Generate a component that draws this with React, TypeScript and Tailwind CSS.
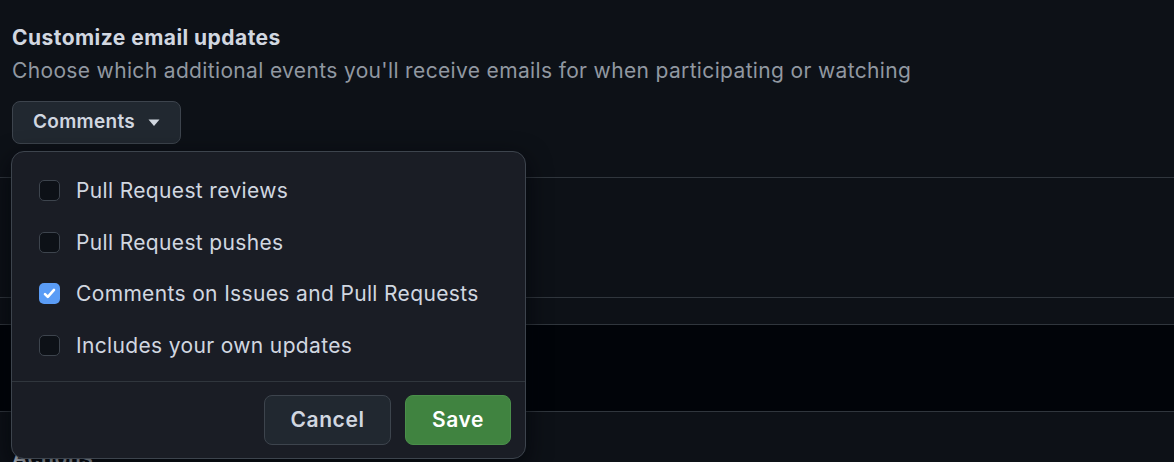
import { useState } from "react";

const options = [
  { id: "reviews", label: "Pull Request reviews", checked: false },
  { id: "pushes", label: "Pull Request pushes", checked: false },
  { id: "comments", label: "Comments on Issues and Pull Requests", checked: true },
  { id: "own", label: "Includes your own updates", checked: false },
];

function Checkbox({ checked }: { checked: boolean }) {
  if (checked) {
    return (
      <span className="flex h-[21px] w-[21px] items-center justify-center rounded-[5px] bg-[#5a9cf6]">
        <svg width="15" height="15" viewBox="0 0 16 16" fill="none" stroke="white" strokeWidth={2.8} strokeLinecap="round" strokeLinejoin="round">
          <path d="M3.2 8.6l3 3L12.8 4.2" />
        </svg>
      </span>
    );
  }
  return <span className="h-[21px] w-[21px] rounded-[5px] border border-[#3d444d] bg-[#0d1117]" />;
}

export default function App() {
  const [items, setItems] = useState(options);

  function toggle(id: string) {
    setItems((prev) => prev.map((o) => (o.id === id ? { ...o, checked: !o.checked } : o)));
  }

  return (
    <div
      className="relative h-[462px] w-[1174px] overflow-hidden bg-[#0d1117] text-[#d1d7e0]"
      style={{ fontFamily: "Inter, 'Noto Sans', sans-serif" }}
    >
      {/* Header */}
      <div className="px-3 pt-[25px]">
        <h2 className="text-[21px] font-bold leading-[26px] tracking-[0.45px] text-[#d1d7e0]">Customize email updates</h2>
        <p className="mt-[7px] text-[21px] leading-[26px] tracking-[0.35px] text-[#9198a1]">
          Choose which additional events you'll receive emails for when participating or watching
        </p>
        <button className="mt-[17px] flex h-[43px] items-center gap-[13px] rounded-[8px] border border-[#3d444d] bg-[#212830] pl-5 pr-5 text-[19px] font-semibold tracking-[0.3px] text-[#d1d7e0]">
          Comments
          <svg width="12" height="8" viewBox="0 0 12 8" fill="#d1d7e0">
            <path d="M0.5 0.5h11L6 7z" />
          </svg>
        </button>
      </div>

      {/* Settings rows behind the overlay */}
      <div className="mt-[33px] border-t border-[#30363d]">
        <div className="h-[119px]" />
        <div className="h-[27px] border-t border-[#30363d]" />
        <div className="h-[87px] border-t border-[#30363d] bg-[#010409]" />
        <div className="border-t border-[#30363d] px-3 pt-[30px]">
          <span className="text-[21px] font-semibold tracking-[0.6px] text-[#d1d7e0]">Actions</span>
        </div>
      </div>

      {/* Dropdown overlay */}
      <div className="absolute left-[11px] top-[151px] w-[515px] rounded-[13px] border border-[#3d444d] bg-[#1a1d25] shadow-[0_8px_24px_rgba(1,4,9,0.75)]">
        <div className="px-[27px] pt-[13px] pb-[10px]">
          {items.map((o) => (
            <label key={o.id} className="flex h-[51.5px] cursor-pointer items-center gap-[16px]" onClick={() => toggle(o.id)}>
              <Checkbox checked={o.checked} />
              <span className="text-[21px] tracking-[0.35px] text-[#d1d7e0]">{o.label}</span>
            </label>
          ))}
        </div>
        <div className="flex justify-end gap-[14px] border-t border-[#30363d] px-[14px] pb-[13px] pt-[13px]">
          <button className="h-[50px] w-[127px] rounded-[8px] border border-[#3d444d] bg-[#212830] text-[21px] font-semibold tracking-[0.6px] text-[#d1d7e0]">
            Cancel
          </button>
          <button className="h-[50px] w-[106px] rounded-[8px] border border-[#4a8f4a] bg-[#408340] text-[21px] font-semibold tracking-[0.6px] text-white">
            Save
          </button>
        </div>
      </div>
    </div>
  );
}
